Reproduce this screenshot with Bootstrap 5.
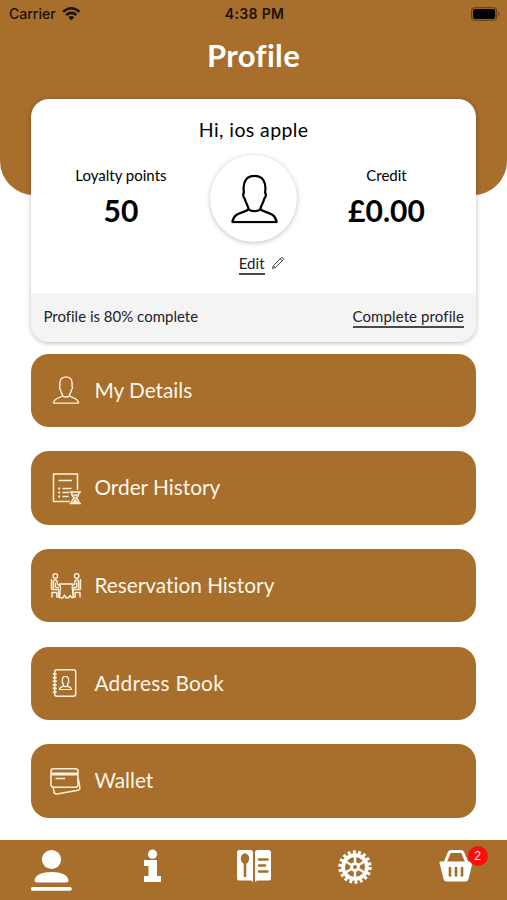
<!DOCTYPE html>
<html lang="en">
<head>
<meta charset="utf-8">
<meta name="viewport" content="width=device-width, initial-scale=1">
<title>Profile</title>
<link href="https://cdn.jsdelivr.net/npm/bootstrap@5.3.0/dist/css/bootstrap.min.css" rel="stylesheet">
<style>
  :root { --brand: #a76e2c; }
  body { font-family: Lato, "Liberation Sans", sans-serif; color: #000; background: #fff; font-variant-ligatures: none; }
  svg { display: block; flex: none; overflow: visible; }
  .screen { height: 900px; overflow: hidden; }
  .hero { height: 195px; background: var(--brand); border-radius: 0 0 34px 34px; flex: none; }
  .status { height: 27px; padding: 0 7px 0 9px; font: 500 14px Inter, sans-serif; color: #1c1206; }
  .status > * { flex: 1 1 0; }
  .status .clock { font-weight: 600; letter-spacing: .35px; }
  .title { font-size: 31px; line-height: 38px; font-weight: 700; margin-top: 9px; color: #fff; letter-spacing: .35px; }
  .summary { margin: -96.5px 31px 0 31.4px; height: 243px; border-radius: 18px; box-shadow: 0 1px 5px rgba(0,0,0,.28); flex: none; overflow: hidden; }
  .greet { font-size: 19.5px; line-height: 24px; padding-top: 19px; letter-spacing: .4px; }
  .stats { padding-top: 13px; }
  .side { width: 180px; padding-top: 10px; }
  .caption { font-size: 15px; line-height: 20px; }
  .amount { font-size: 30px; line-height: 36px; font-weight: 700; margin-top: 7px; }
  .avatar { width: 87px; height: 87px; box-shadow: 0 1px 5px rgba(0,0,0,.25); }
  .edit { padding: 11px 0 0 16px; font-size: 15px; }
  .ruled { line-height: 20px; border-bottom: 2px solid #4a4a4a; color: #222; letter-spacing: .1px; }
  .foot { height: 49px; background: #f4f4f4; padding: 0 12px; font-size: 15px; color: #222; }
  .foot .note { padding-bottom: 2px; }
  .menu { padding: 12px 31px 0 31.4px; gap: 24.2px; }
  .entry { height: 73.5px; border-radius: 18px; background: var(--brand); color: #fff6ea; font-size: 20.8px; padding-left: 18px; gap: 11px; }
  .entry span { padding-bottom: 2px; }
  .entry .spaced { letter-spacing: .3px; }
  .tabs { height: 60px; background: var(--brand); padding: 0 0; flex: none; }
  .tab { flex: 1 1 0; height: 60px; }
  .count { width: 20px; height: 20px; background: #fb0d0d; color: #fff; font: 12px/20px "Liberation Sans", sans-serif; left: 62px; top: 6px; }
</style>
</head>
<body>
<svg width="0" height="0" class="position-absolute" aria-hidden="true">
  <defs>
    <symbol id="person" viewBox="0 0 48 50">
      <path d="M18 35.500C17.600 31.500 14.800 29 14 24.500C12.200 23 12 19.500 13.200 18.500C11.500 7 16 1.500 24 1.500C32 1.500 36.500 7 34.800 18.500C36 19.500 35.800 23 34 24.500C33.200 29 30.400 31.500 30 35.500C33 39 45.500 38 46.500 48.500H1.500C2.500 38 15 39 18 35.500C21 38 27 38 30 35.500"/>
    </symbol>
  </defs>
</svg>
<main class="screen d-flex flex-column">
  <header class="hero">
    <div class="status d-flex align-items-center">
      <div class="d-flex align-items-center gap-1">
        <span>Carrier</span>
        <svg class="ms-1" width="18" height="14" viewBox="1 0 18 14" fill="none" stroke="#1c1206" stroke-width="2.500"><path d="M.2 4.700Q8.300-2.300 16.400 4.700M3.200 8Q8.300 3.700 13.400 8"/><path d="M5.300 10.200Q8.300 7.800 11.300 10.200L8.300 13.600Z" fill="#1c1206" stroke="none"/></svg>
      </div>
      <div class="clock text-center">4:38 PM</div>
      <div class="d-flex justify-content-end">
        <svg width="29" height="14" viewBox="0 0 29 14"><rect x=".6" y=".6" width="25" height="12.800" rx="3.500" fill="none" stroke="#6b4519" stroke-width="1.200"/><rect x="2" y="2" width="22.200" height="10" rx="2" fill="#000"/><path d="M27 4.500Q30 7 27 9.500Z" fill="#6b4519"/></svg>
      </div>
    </div>
    <h1 class="title text-center mb-0">Profile</h1>
  </header>

  <section class="summary bg-white d-flex flex-column">
    <div class="greet text-center">Hi, ios apple</div>
    <div class="stats d-flex justify-content-between">
      <div class="side text-center"><div class="caption">Loyalty points</div><div class="amount">50</div></div>
      <div class="avatar rounded-circle bg-white d-flex align-items-center justify-content-center">
        <svg width="47" height="49" viewBox="-1 -.5 47 49" fill="none" stroke="#000" stroke-width="2.300" stroke-linejoin="round"><use href="#person" width="47" height="49"/></svg>
      </div>
      <div class="side text-center"><div class="caption">Credit</div><div class="amount">£0.00</div></div>
    </div>
    <div class="edit d-flex justify-content-center">
      <span class="ruled">Edit</span>
      <svg width="12" height="12" viewBox="1 0 12 12" fill="none" stroke="#333" stroke-width=".9" class="ms-2 mt-1"><path d="M.5 11.500L1.400 8.600L9.200 .8Q10.400 .2 11.100 .9Q11.800 1.700 11.200 2.800L3.400 10.600ZM8.200 1.800L10.200 3.800M1.400 8.600L3.400 10.600"/></svg>
    </div>
    <div class="foot d-flex align-items-center justify-content-between mt-auto">
      <span class="note">Profile is 80% complete</span>
      <span class="ruled">Complete profile</span>
    </div>
  </section>

  <nav class="menu d-flex flex-column flex-grow-1">
    <div class="entry d-flex align-items-center">
      <svg width="34" height="34" viewBox="0 0 34 34" fill="none" stroke="#fff1dc" stroke-linejoin="round"><use href="#person" x="3.500" y="3" width="27" height="28" stroke-width="2.500"/></svg>
      <span>My Details</span>
    </div>
    <div class="entry d-flex align-items-center">
      <svg width="34" height="34" viewBox="0 0 34 34" fill="none" stroke="#fff1dc" stroke-width="1.500"><path d="M21 30.500H4.500V3H28.500V19M9.500 9.500H23"/><path d="M13.500 17.500H22.500M13.500 21.500H20M13.500 25.500H19.500"/><path d="M9.200 17.500H11.200M9.200 21.500H11.200M9.200 25.500H11.200" stroke-width="2"/><path d="M20.500 21H32M20.500 32.500H32M22.500 21Q22.500 24.800 25.500 26.800Q22.500 28.800 22.500 32.500M30 21Q30 24.800 27 26.800Q30 28.800 30 32.500M24.500 24H28" stroke-width="1.500"/><path d="M24 32L26.250 29L28.500 32Z" fill="#fff1dc"/></svg>
      <span>Order History</span>
    </div>
    <div class="entry d-flex align-items-center">
      <svg width="34" height="34" viewBox="0 0 34 34" fill="none" stroke="#fff1dc" stroke-width="1.400" stroke-linejoin="round"><g id="diner"><circle cx="6.300" cy="6.900" r="2.300"/><path d="M2.500 10V20.500M4.300 19.500V13Q4.300 11 6.200 11T8.200 13V15L11 17M6.300 13.500V18L10 19M2.500 20.500H8.500Q9.700 20.500 9.700 22V28H7.800V23.500H3V28.500"/></g><use href="#diner" transform="matrix(-1 0 0 1 34 0)"/><path d="M10.500 15H23.700L23.200 18.500L24.500 28.500H22.500L21 26.500L19.500 28.800H17L15.500 26L14 28.800H10.500L11.500 18.500Z"/></svg>
      <span>Reservation History</span>
    </div>
    <div class="entry d-flex align-items-center">
      <svg width="34" height="34" viewBox="0 0 34 34" fill="none" stroke="#fff1dc" stroke-width="1.500" stroke-linejoin="round"><rect x="5.700" y="3.800" width="21" height="26.500" rx="2.200"/><path d="M3.700 8H7.800M3.700 11.600H7.800M3.700 15.200H7.800M3.700 18.800H7.800M3.700 22.400H7.800M3.700 26H7.800" stroke-width="1.700"/><use href="#person" x="9.700" y="10" width="13.500" height="14" stroke-width="5"/></svg>
      <span class="spaced">Address Book</span>
    </div>
    <div class="entry d-flex align-items-center">
      <svg width="34" height="34" viewBox="0 0 34 34" fill="none" stroke="#fff1dc" stroke-width="1.500" stroke-linejoin="round"><rect x="2" y="4.800" width="27" height="18.500" rx="2.500"/><path d="M2 10H29" stroke-width="3"/><path d="M6.500 14.500H16"/><path d="M4.300 23.500L5 28Q5.500 30.500 8 30L29 26.200Q31.300 25.600 30.800 23.200L29.200 14.500"/></svg>
      <span>Wallet</span>
    </div>
  </nav>

  <footer class="tabs d-flex">
    <div class="tab d-flex justify-content-center">
      <svg width="41" height="60" viewBox="0 0 41 60" fill="#fff"><circle cx="21.500" cy="19.500" r="9.600"/><path d="M4.500 40Q6.500 32 21.500 32T38.500 40Q38.500 42.500 36 42.500H7Q4.500 42.500 4.500 40Z"/><rect x=".8" y="47" width="41" height="3.700" rx="1.800"/></svg>
    </div>
    <div class="tab d-flex justify-content-center">
      <svg width="20" height="60" viewBox="0 0 20 60" fill="#fff"><circle cx="10.500" cy="14.200" r="4.600"/><path d="M2 20H15V36H19V42H2V36H6.500V26H2Z"/></svg>
    </div>
    <div class="tab d-flex justify-content-center">
      <svg width="34" height="60" viewBox="0 0 34 60"><path d="M2.500 10H13.500Q16 10 16 12.500V42Q15 40.600 13 40.600H2.500Q0 40.600 0 38V12.500Q0 10 2.500 10ZM20.500 10H31.500Q34 10 34 12.500V38Q34 40.600 31.500 40.600H21Q19 40.600 18 42V12.500Q18 10 20.500 10Z" fill="#fff"/><ellipse cx="8" cy="18.500" rx="4.100" ry="5.200" fill="#a76e2c"/><path d="M8 22V36M22 19.500H30.500M22 25.500H28M22 31.500H30.500" fill="none" stroke="#a76e2c" stroke-width="2.600" stroke-linecap="round"/></svg>
    </div>
    <div class="tab d-flex justify-content-center">
      <svg width="34" height="60" viewBox="-17 -27 34 60" fill="none" stroke="#fff"><circle r="14.800" stroke-width="3.800" stroke-dasharray="2.900 2.267"/><circle r="11.900" stroke-width="3.800"/><circle r="3.400" stroke-width="2.800"/><path id="spoke" d="M0-3.500V-11M0 3.500V11" stroke-width="2.500"/><use href="#spoke" transform="rotate(60)"/><use href="#spoke" transform="rotate(120)"/></svg>
    </div>
    <div class="tab d-flex justify-content-center position-relative">
      <svg width="34" height="60" viewBox="0 0 34 60"><path d="M6 23L10 13Q10.600 11.600 12 11.600H22Q23.400 11.600 24 13L28 23" fill="none" stroke="#fff" stroke-width="3"/><path d="M1.500 21.500H32.500Q34 21.500 33.500 23L29.500 39Q28.800 41.500 26.500 41.500H7.500Q5.200 41.500 4.500 39L.5 23Q0 21.500 1.500 21.500Z" fill="#fff"/><path d="M11 28V35.500M17 28V35.500M23 28V35.500" stroke="#a76e2c" stroke-width="2.700" stroke-linecap="round"/></svg>
      <span class="count position-absolute rounded-circle text-center">2</span>
    </div>
  </footer>
</main>
<script src="https://cdn.jsdelivr.net/npm/bootstrap@5.3.0/dist/js/bootstrap.bundle.min.js"></script>
</body>
</html>
